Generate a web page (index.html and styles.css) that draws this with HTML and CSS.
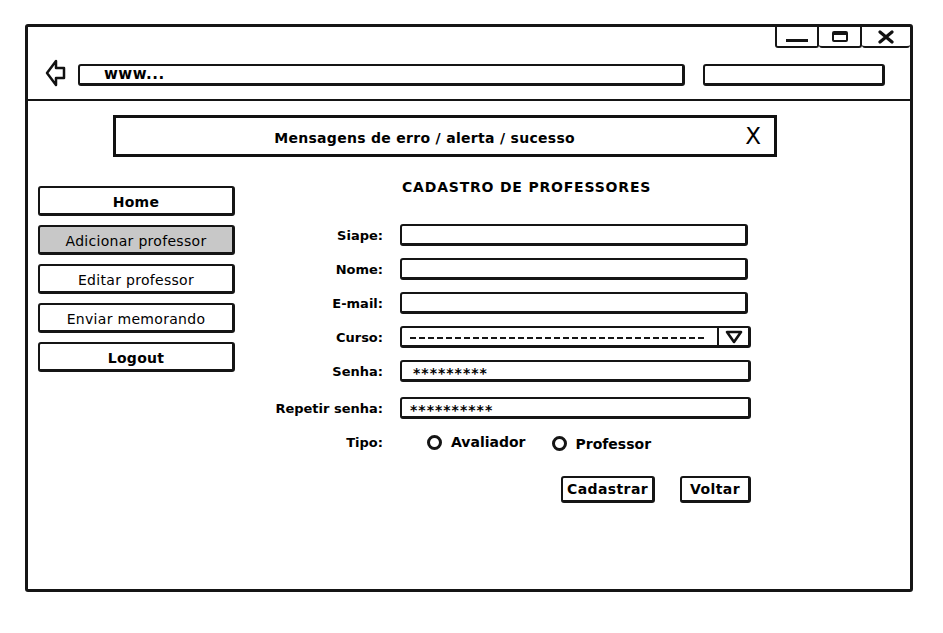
FILE: index.html
```html
<!DOCTYPE html>
<html lang="pt-BR">
<head>
    <meta charset="UTF-8">
    <meta name="viewport" content="width=device-width, initial-scale=1.0">
    <title>Cadastro de Professores</title>
    <link rel="stylesheet" href="styles.css">
</head>
<body>

    <div class="window">
        <div class="header">
            <div class="titlebar">
                <div class="control"><span class="min-bar"></span></div>
                <div class="control"><span class="max-box"></span></div>
                <div class="control">
                    <svg width="18" height="14" viewBox="0 0 18 14"><path d="M3 2 L15 12 M15 2 L3 12" stroke="#111" stroke-width="3.2" stroke-linecap="round"/></svg>
                </div>
            </div>
            <div class="addressbar">
                <svg class="back" width="22" height="30" viewBox="0 0 22 30">
                    <path d="M2 15 L11 3 L11 10 L19 10 L19 20 L11 20 L11 27 Z" fill="none" stroke="#111" stroke-width="2.5" stroke-linejoin="round"/>
                </svg>
                <div class="field url">www...</div>
                <div class="field search"></div>
            </div>
        </div>

        <div class="alert">
            <span class="alert-text">Mensagens de erro / alerta / sucesso</span>
            <span class="alert-close">X</span>
        </div>

        <div class="main">
            <nav class="menu">
                <a class="menu-btn bold">Home</a>
                <a class="menu-btn active">Adicionar professor</a>
                <a class="menu-btn">Editar professor</a>
                <a class="menu-btn">Enviar memorando</a>
                <a class="menu-btn bold">Logout</a>
            </nav>

            <form class="form" id="cadastroForm">
                <h1 class="title">CADASTRO DE PROFESSORES</h1>

                <div class="row">
                    <label for="siape">Siape:</label>
                    <div class="field input" id="siape"></div>
                </div>
                <div class="row">
                    <label for="nome">Nome:</label>
                    <div class="field input" id="nome"></div>
                </div>
                <div class="row">
                    <label for="email">E-mail:</label>
                    <div class="field input" id="email"></div>
                </div>
                <div class="row">
                    <label for="curso">Curso:</label>
                    <div class="field select wide" id="curso">
                        <span class="dashes"></span>
                        <span class="select-arrow">
                            <svg width="20" height="16" viewBox="0 0 20 16"><path d="M3 3 L17 3 L10 13 Z" fill="none" stroke="#111" stroke-width="2.6" stroke-linejoin="round"/></svg>
                        </span>
                    </div>
                </div>
                <div class="row">
                    <label for="senha">Senha:</label>
                    <div class="field input wide stars" id="senha">*********</div>
                </div>
                <div class="row spaced">
                    <label for="senha2">Repetir senha:</label>
                    <div class="field input wide stars tight" id="senha2">**********</div>
                </div>
                <div class="row">
                    <label>Tipo:</label>
                    <div class="radios">
                        <span class="radio"><span class="dot"></span>Avaliador</span>
                        <span class="radio second"><span class="dot"></span>Professor</span>
                    </div>
                </div>
                <div class="row actions">
                    <span></span>
                    <div class="buttons">
                        <button type="submit" class="btn">Cadastrar</button>
                        <button type="button" class="btn">Voltar</button>
                    </div>
                </div>
            </form>
        </div>
    </div>

</body>
</html>
```

FILE: styles.css
```css
body {
    margin: 0;
    background-color: #ffffff;
    font-family: "DejaVu Sans", sans-serif;
    font-weight: bold;
    font-size: 13px;
    color: #000;
}

.window {
    box-sizing: border-box;
    margin: 24px 0 0 25px;
    width: 888px;
    height: 568px;
    border: 3px solid #151515;
    border-radius: 3px;
}

.header {
    border-bottom: 2px solid #151515;
    padding-bottom: 11px;
}

.titlebar {
    display: flex;
    justify-content: flex-end;
    height: 21px;
}

.control {
    box-sizing: border-box;
    width: 44px;
    height: 21px;
    border: 2px solid #151515;
    border-top: none;
    border-radius: 0 0 3px 3px;
    display: flex;
    align-items: center;
    justify-content: center;
}

.control + .control {
    border-left: none;
    width: 43px;
}

.control:last-child {
    width: 48px;
    border-right: none;
}

.min-bar {
    display: block;
    width: 22px;
    height: 3px;
    background: #151515;
    margin-top: 7px;
}

.max-box {
    box-sizing: border-box;
    display: block;
    width: 16px;
    height: 11px;
    border: 2px solid #151515;
    border-top-width: 4px;
    border-radius: 2px;
}

.addressbar {
    display: flex;
    align-items: center;
    height: 30px;
    margin-top: 10px;
    padding: 0 25px 0 17px;
}

.back {
    flex: none;
}

.field {
    box-sizing: border-box;
    height: 22px;
    border: 2px solid #151515;
    border-right-width: 3px;
    border-bottom-width: 3px;
    border-radius: 3px;
    background: #fff;
}

.url {
    flex: 1;
    margin-left: 11px;
    margin-top: 3px;
    padding-left: 24px;
    line-height: 17px;
    font-size: 15px;
    letter-spacing: 0.5px;
}

.search {
    width: 182px;
    margin-left: 18px;
    margin-top: 3px;
}

.alert {
    box-sizing: border-box;
    display: flex;
    align-items: center;
    width: 664px;
    height: 42px;
    margin: 14px 0 0 85px;
    padding-top: 4px;
    border: 3px solid #111;
}

.alert-text {
    flex: 1;
    text-align: center;
    font-size: 14px;
    letter-spacing: 0.3px;
    padding-right: 12px;
}

.alert-close {
    font-size: 23px;
    font-weight: normal;
    margin-right: 13px;
    margin-top: -4px;
}

.main {
    display: flex;
    align-items: flex-start;
    margin-top: 20px;
}

.menu {
    display: flex;
    flex-direction: column;
    gap: 9px;
    width: 197px;
    margin: 9px 0 0 10px;
}

.menu-btn {
    box-sizing: border-box;
    height: 30px;
    border: 2px solid #151515;
    border-right-width: 3px;
    border-bottom-width: 3px;
    border-radius: 3px;
    display: flex;
    align-items: center;
    justify-content: center;
    font-weight: normal;
    font-size: 14px;
    letter-spacing: 0.3px;
    padding-top: 2px;
}

.menu-btn.bold {
    font-weight: bold;
}

.menu-btn.active {
    background-color: #c8c8c8;
}

.form {
    display: flex;
    flex-direction: column;
    gap: 12px;
    margin-left: 28px;
    width: 490px;
}

.title {
    margin: 0 0 15px 139px;
    height: 20px;
    line-height: 20px;
    font-size: 14px;
    letter-spacing: 0.8px;
}

.row {
    display: grid;
    grid-template-columns: 120px 348px;
    column-gap: 17px;
    align-items: center;
    height: 22px;
}

.row.spaced {
    margin-top: 3px;
}

.row label {
    text-align: right;
}

.field.wide {
    width: 351px;
}

.stars {
    padding-left: 11px;
    line-height: 22px;
    font-size: 14px;
    letter-spacing: 1px;
}

.stars.tight {
    padding-left: 8px;
}

.select {
    display: flex;
    align-items: center;
}

.dashes {
    flex: 1;
    height: 2px;
    margin: 2px 10px 0 8px;
    background: repeating-linear-gradient(90deg, #151515 0 6px, transparent 6px 9px);
}

.select-arrow {
    box-sizing: border-box;
    width: 31px;
    height: 100%;
    border-left: 2px solid #151515;
    display: flex;
    align-items: center;
    justify-content: center;
}

.radios {
    display: flex;
    align-items: center;
    padding-left: 27px;
    font-size: 14px;
}

.radio {
    display: flex;
    align-items: center;
    gap: 9px;
}

.radio.second {
    margin-left: 26px;
    margin-top: 3px;
}

.dot {
    box-sizing: border-box;
    width: 15px;
    height: 15px;
    border: 3.5px solid #151515;
    border-radius: 50%;
}

.row.actions {
    height: 27px;
    margin-top: 11px;
}

.buttons {
    display: flex;
    justify-content: flex-end;
    gap: 25px;
    margin-right: -3px;
}

.btn {
    box-sizing: border-box;
    height: 27px;
    padding: 0 4px 1px;
    border: 2px solid #151515;
    border-right-width: 3px;
    border-bottom-width: 3px;
    border-radius: 3px;
    background: #fff;
    font-family: "DejaVu Sans", sans-serif;
    font-weight: bold;
    font-size: 14px;
    letter-spacing: 0.4px;
    color: #000;
}

.btn:first-child {
    width: 94px;
}

.btn:last-child {
    width: 71px;
}
```
